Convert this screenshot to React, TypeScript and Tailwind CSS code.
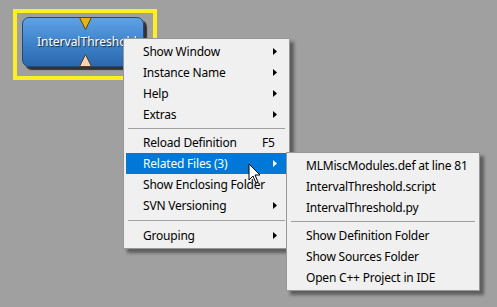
import React from 'react';

type Item =
  | { kind: 'item'; label: string; shortcut?: string; sub?: boolean; active?: boolean }
  | { kind: 'sep'; h: string };

const mainItems: Item[] = [
  { kind: 'item', label: 'Show Window', sub: true },
  { kind: 'item', label: 'Instance Name', sub: true },
  { kind: 'item', label: 'Help', sub: true },
  { kind: 'item', label: 'Extras', sub: true },
  { kind: 'sep', h: 'h-[7px]' },
  { kind: 'item', label: 'Reload Definition', shortcut: 'F5' },
  { kind: 'item', label: 'Related Files (3)', sub: true, active: true },
  { kind: 'item', label: 'Show Enclosing Folder' },
  { kind: 'item', label: 'SVN Versioning', sub: true },
  { kind: 'sep', h: 'h-[9px]' },
  { kind: 'item', label: 'Grouping', sub: true },
];

const subItems: Item[] = [
  { kind: 'item', label: 'MLMiscModules.def at line 81' },
  { kind: 'item', label: 'IntervalThreshold.script' },
  { kind: 'item', label: 'IntervalThreshold.py' },
  { kind: 'sep', h: 'h-[7px]' },
  { kind: 'item', label: 'Show Definition Folder' },
  { kind: 'item', label: 'Show Sources Folder' },
  { kind: 'item', label: 'Open C++ Project in IDE' },
];

const Arrow = ({ white }: { white?: boolean }) => (
  <svg width="4" height="7" viewBox="0 0 4 7" className="ml-auto mr-[9px] shrink-0">
    <path d="M0 0 L4 3.5 L0 7 Z" fill={white ? '#ffffff' : '#000000'} />
  </svg>
);

const MenuList = ({ items }: { items: Item[] }) => (
  <div className="flex flex-col">
    {items.map((it, i) =>
      it.kind === 'sep' ? (
        <div key={i} className={`${it.h} flex items-center px-[4px]`}>
          <div className="h-px w-full bg-[#a0a0a0]" />
        </div>
      ) : (
        <div
          key={i}
          className={`ml-[2px] mr-[3px] flex h-[21px] items-center pl-[17px] ${
            it.active ? 'bg-[#0078d7] text-white' : 'text-black'
          }`}
        >
          <span className="w-[119px] shrink-0 whitespace-nowrap">{it.label}</span>
          {it.shortcut && <span>{it.shortcut}</span>}
          {it.sub && <Arrow white={it.active} />}
        </div>
      )
    )}
  </div>
);

export default function App() {
  return (
    <div
      className="relative h-[307px] w-[497px] overflow-hidden bg-[#a0a0a0] text-[12px] tracking-[-0.2px]"
      style={{ fontFamily: '"Noto Sans", "Open Sans", sans-serif' }}
    >
      {/* selected module node */}
      <div className="absolute left-[13px] top-[9px] h-[71px] w-[144px] border-4 border-[#ffee22] pl-[5px] pt-[4px]">
        <div className="relative h-[50px] w-[122px] rounded-[7px] border border-[#1d4a80] bg-gradient-to-b from-[#5fa2e4] via-[#3f84cc] to-[#2c68ad] shadow-[3px_3px_1px_rgba(30,30,30,0.85)]">
          <div className="flex h-full items-center overflow-hidden whitespace-nowrap pl-[14px] text-[12px] tracking-[0px] text-white [text-shadow:1px_1px_1px_#1a2a40]">
            IntervalThreshold
          </div>
          <svg width="13" height="13" viewBox="0 0 13 13" className="absolute left-[56px] top-[-1px]">
            <path d="M0.5 0.5 L12.5 0.5 L6.5 12.5 Z" fill="#e5b318" stroke="#5a4400" strokeWidth="1" />
          </svg>
          <svg width="13" height="13" viewBox="0 0 13 13" className="absolute bottom-[-1px] left-[56px]">
            <path d="M6.5 0.5 L12.5 12.5 L0.5 12.5 Z" fill="#f8d3b0" stroke="#4a3a30" strokeWidth="1" />
          </svg>
        </div>
      </div>

      {/* context menu */}
      <div className="absolute left-[123px] top-[38px] w-[167px] border border-[#979797] bg-[#f0f0f0] py-[2px] shadow-[4px_4px_3px_rgba(40,40,40,0.55)]">
        <MenuList items={mainItems} />
      </div>

      {/* related files submenu */}
      <div className="absolute left-[286px] top-[152px] w-[194px] border border-[#979797] bg-[#f0f0f0] py-[2px] shadow-[4px_4px_3px_rgba(40,40,40,0.55)]">
        <MenuList items={subItems} />
      </div>

      {/* mouse cursor */}
      <svg width="13" height="21" viewBox="0 0 13 21" className="absolute left-[248px] top-[163px]">
        <path
          d="M1 1 L1 17 L5 13 L8 20 L10 19 L7 12 L12 12 Z"
          fill="#ffffff"
          stroke="#000000"
          strokeWidth="1"
        />
      </svg>
    </div>
  );
}
